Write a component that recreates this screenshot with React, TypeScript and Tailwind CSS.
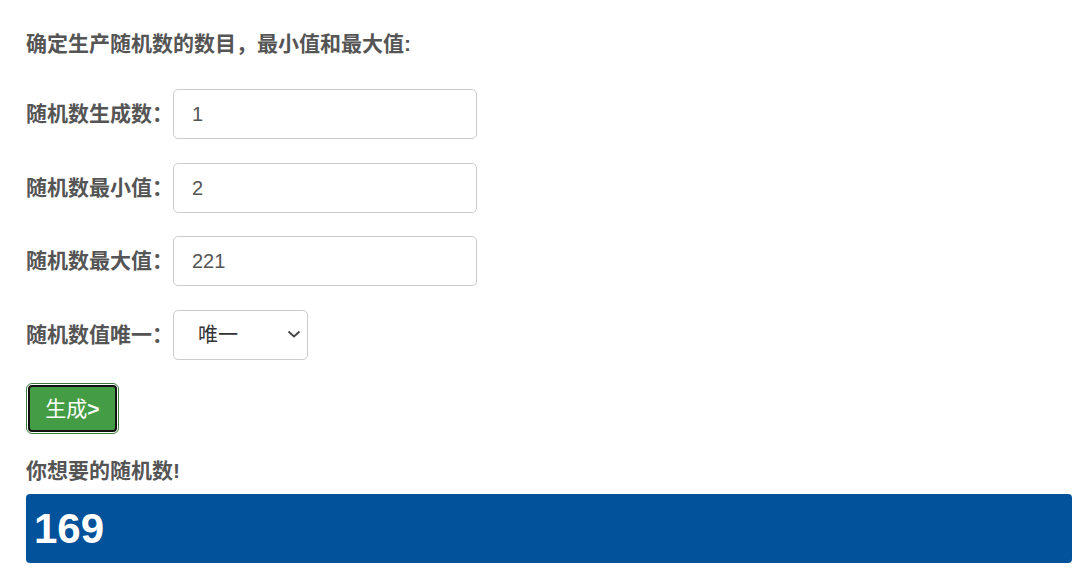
import { useState } from "react";

const font = "font-['Liberation_Sans','Noto_Sans_CJK_SC',sans-serif]";

function Field({ label, value }: { label: string; value: string }) {
  return (
    <div className="flex h-[50px] items-center">
      <label className="w-[147px] text-[21px] font-bold text-[#555]">{label}</label>
      <input
        defaultValue={value}
        className="h-[50px] w-[304px] rounded-[5px] border border-[#ccc] bg-white px-[18px] text-[20px] text-[#555] outline-none"
      />
    </div>
  );
}

export default function App() {
  const [result] = useState("169");
  return (
    <div className={`${font} min-h-[577px] bg-white pl-[26px] pr-[18px] pt-[30px]`}>
      <h4 className="text-[21px] font-bold leading-[28px] text-[#555]">
        确定生产随机数的数目，最小值和最大值:
      </h4>

      <div className="mt-[31px] flex flex-col">
        <Field label="随机数生成数：" value="1" />
        <div className="mt-[24px]">
          <Field label="随机数最小值：" value="2" />
        </div>
        <div className="mt-[23px]">
          <Field label="随机数最大值：" value="221" />
        </div>
        <div className="mt-[24px] flex h-[50px] items-center">
          <label className="w-[147px] text-[21px] font-bold text-[#555]">随机数值唯一：</label>
          <div className="relative h-[50px] w-[135px]">
            <select className="h-full w-full appearance-none rounded-[5px] border border-[#ccc] bg-white pl-[24px] text-[20px] text-[#333] outline-none">
              <option>唯一</option>
              <option>不唯一</option>
            </select>
            <svg
              className="pointer-events-none absolute right-[7px] top-[19px]"
              width="14"
              height="10"
              viewBox="0 0 14 10"
              fill="none"
            >
              <path d="M1.5 2.5 L7 7.5 L12.5 2.5" stroke="#444" strokeWidth="1.8" />
            </svg>
          </div>
        </div>
      </div>

      <div className="mt-[23px] inline-flex rounded-[6px] border border-[#3b7d3c] bg-white p-px">
        <button className="h-[47px] w-[89px] rounded-[4px] border-2 border-[#111] bg-[#449d44] text-[21px] text-white">
          生成<span className="font-bold">&gt;</span>
        </button>
      </div>

      <h4 className="mt-[23px] text-[21px] font-bold leading-[28px] text-[#555]">你想要的随机数!</h4>

      <div className="mt-[9px] flex h-[69px] items-center rounded-[4px] bg-[#01529a] pl-[8px]">
        <span className="text-[42px] font-bold text-white">{result}</span>
      </div>
    </div>
  );
}
